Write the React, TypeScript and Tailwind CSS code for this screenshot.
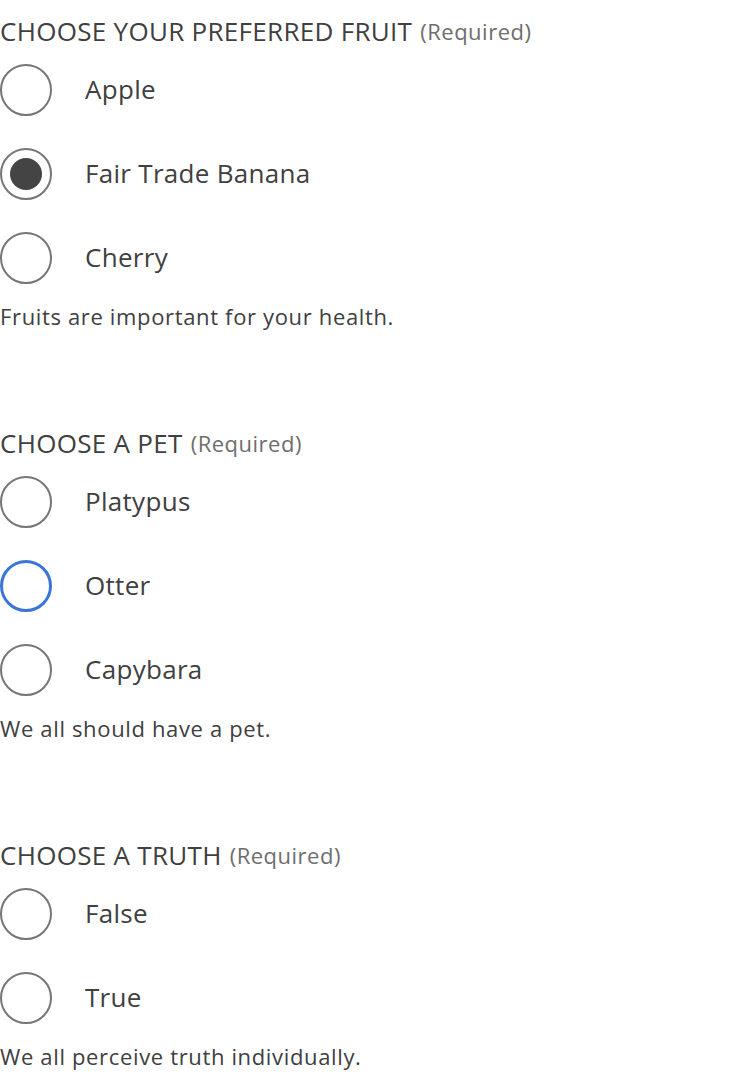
import { FC } from 'react';

type Group = {
  title: string;
  options: string[];
  checked?: number;
  focused?: number;
  help: string;
};

const groups: Group[] = [
  {
    title: 'CHOOSE YOUR PREFERRED FRUIT',
    options: ['Apple', 'Fair Trade Banana', 'Cherry'],
    checked: 1,
    help: 'Fruits are important for your health.',
  },
  {
    title: 'CHOOSE A PET',
    options: ['Platypus', 'Otter', 'Capybara'],
    focused: 1,
    help: 'We all should have a pet.',
  },
  {
    title: 'CHOOSE A TRUTH',
    options: ['False', 'True'],
    help: 'We all perceive truth individually.',
  },
];

const Radio: FC<{ checked?: boolean; focused?: boolean }> = ({ checked, focused }) => (
  <span
    className={
      focused
        ? 'w-[52px] h-[52px] rounded-full border-[3px] border-[#3a76d8] bg-white flex items-center justify-center shrink-0'
        : 'w-[52px] h-[52px] rounded-full border-2 border-[#767676] bg-white flex items-center justify-center shrink-0'
    }
  >
    {checked && <span className="w-[32px] h-[32px] rounded-full bg-[#444444]" />}
  </span>
);

const App: FC = () => {
  return (
    <div className="bg-white min-h-[1088px] w-[750px] text-[#404040] font-['Open_Sans',sans-serif]">
      <div className="flex flex-col gap-[84px]">
        {groups.map((g) => (
          <fieldset key={g.title} className="flex flex-col">
            {/* Legend */}
            <div className="h-[64px] flex items-center pb-[2px]">
              <span className="text-[26px] leading-none tracking-[0.3px]">{g.title}</span>
              <span className="text-[22px] leading-none text-[#6e6e6e] ml-[8px] tracking-[0.5px]">(Required)</span>
            </div>

            {/* Options */}
            <div className="flex flex-col gap-[32px]">
              {g.options.map((opt, i) => (
                <label key={opt} className="flex items-center h-[52px]">
                  <Radio checked={g.checked === i} focused={g.focused === i} />
                  <span className="ml-[33px] pb-[2px] text-[26px] leading-none tracking-[0.3px]">{opt}</span>
                </label>
              ))}
            </div>

            {/* Help text */}
            <p className="mt-[20px] text-[22px] leading-[24px] tracking-[0.65px]">{g.help}</p>
          </fieldset>
        ))}
      </div>
    </div>
  );
};

export default App;
